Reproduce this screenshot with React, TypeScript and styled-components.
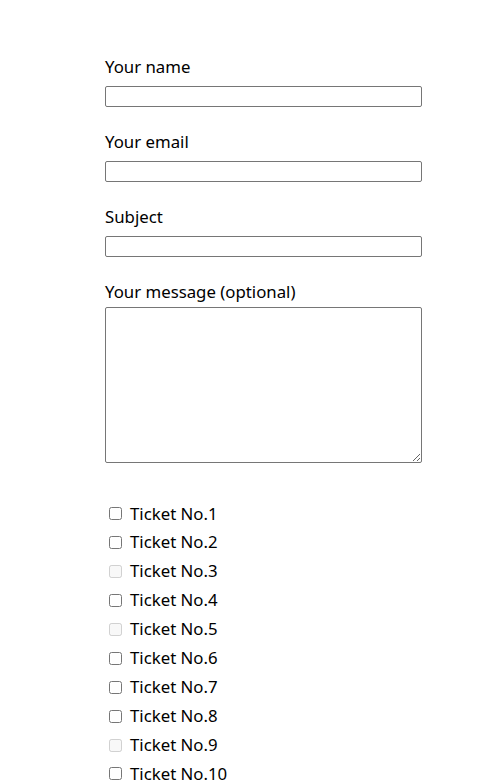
import React from "react";
import styled, { createGlobalStyle } from "styled-components";

const GlobalStyle = createGlobalStyle`
  html, body {
    margin: 0;
    padding: 0;
    background: #ffffff;
  }
  body {
    font-family: "Noto Sans", "Open Sans", sans-serif;
    font-size: 16.8px;
    color: #000000;
  }
`;

const Form = styled.form`
  display: flex;
  flex-direction: column;
  padding: 56px 0 0 105px;
`;

const Field = styled.label<{ $gap: number }>`
  display: flex;
  flex-direction: column;
  align-items: flex-start;
  gap: ${(p) => p.$gap}px;
  margin-bottom: 24px;
`;

const LabelText = styled.span`
  display: block;
  line-height: 22px;
  height: 22px;
`;

const TextInput = styled.input`
  box-sizing: border-box;
  width: 317px;
  height: 21px;
  margin: 0;
  padding: 1px 2px;
  border: 1px solid #767676;
  border-radius: 2px;
  background: #ffffff;
  font: 13.333px "Noto Sans", sans-serif;
`;

const TextArea = styled.textarea`
  box-sizing: border-box;
  width: 317px;
  height: 156px;
  margin: 0;
  padding: 2px;
  border: 1px solid #767676;
  border-radius: 2px;
  background: #ffffff;
  font: 13.333px "DejaVu Sans Mono", monospace;
`;

const CheckList = styled.div`
  display: flex;
  flex-direction: column;
  margin-top: 13px;
`;

const CheckRow = styled.label`
  display: flex;
  align-items: center;
  height: 28.9px;
  line-height: 28.9px;
  padding-left: 4px;
`;

const Box = styled.input`
  width: 13px;
  height: 13px;
  margin: 0;
  flex: none;
`;

const CheckText = styled.span`
  margin-left: 8px;
`;

const fields = [
  { label: "Your name", name: "your-name" },
  { label: "Your email", name: "your-email" },
  { label: "Subject", name: "your-subject" },
];

const tickets = Array.from({ length: 10 }, (_, i) => ({
  n: i + 1,
  disabled: [3, 5, 9].includes(i + 1),
}));

export default function App() {
  return (
    <>
      <GlobalStyle />
      <Form onSubmit={(e) => e.preventDefault()}>
        {fields.map((f) => (
          <Field key={f.name} $gap={8}>
            <LabelText>{f.label}</LabelText>
            <TextInput type="text" name={f.name} />
          </Field>
        ))}
        <Field $gap={3.5}>
          <LabelText>Your message (optional)</LabelText>
          <TextArea name="your-message" />
        </Field>
        <CheckList>
          {tickets.map((t) => (
            <CheckRow key={t.n}>
              <Box type="checkbox" disabled={t.disabled} />
              <CheckText>Ticket No.{t.n}</CheckText>
            </CheckRow>
          ))}
        </CheckList>
      </Form>
    </>
  );
}
